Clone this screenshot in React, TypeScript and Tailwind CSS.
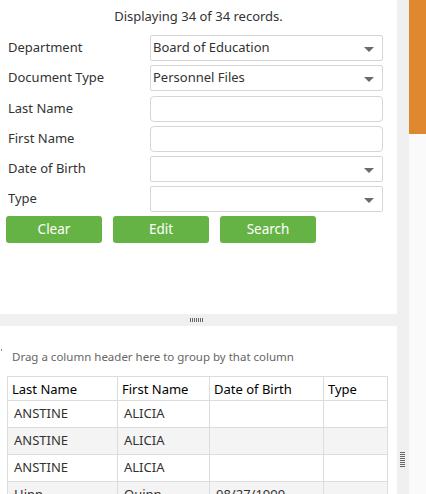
import React from "react";

const font = { fontFamily: '"Noto Sans", "Open Sans", sans-serif' };

function Arrow() {
  return (
    <svg width="10" height="6" viewBox="0 0 10 6" className="absolute right-[8px] top-[11px]">
      <polygon points="0,0 10,0 5,5" fill="#6b6b6b" />
    </svg>
  );
}

function Field({ label, value, select, rounded }: { label: string; value?: string; select?: boolean; rounded?: boolean }) {
  return (
    <div className="flex items-center h-[26px] mb-[4px]">
      <div className="w-[150px] pl-[8px] text-[13px] text-[#333]">{label}</div>
      <div
        className={
          "relative w-[233px] h-[26px] border border-[#d6d6d6] bg-white flex items-center pl-[2px] text-[13px] text-[#333] " +
          (rounded ? "rounded-[4px]" : "rounded-[2px]")
        }
      >
        {value}
        {select && <Arrow />}
      </div>
    </div>
  );
}

function Btn({ children }: { children: React.ReactNode }) {
  return (
    <div className="w-[96px] h-[27px] rounded-[3px] bg-[#65b345] text-white text-[13.5px] flex items-center justify-center">
      {children}
    </div>
  );
}

const rows = [
  ["ANSTINE", "ALICIA", "", ""],
  ["ANSTINE", "ALICIA", "", ""],
  ["ANSTINE", "ALICIA", "", ""],
  ["Hipp", "Quinn", "08/27/1999", ""],
];

export default function App() {
  return (
    <div className="w-[426px] h-[494px] flex overflow-hidden bg-white" style={font}>
      <div className="w-[397px] flex flex-col">
        <div className="h-[314px] bg-white">
          <div className="h-[35px] pt-[7px] text-center text-[13px] text-[#333]">Displaying 34 of 34 records.</div>
          <Field label="Department" value="Board of Education" select />
          <Field label="Document Type" value="Personnel Files" select />
          <div className="h-[1px]" />
          <Field label="Last Name" rounded />
          <Field label="First Name" rounded />
          <Field label="Date of Birth" select />
          <Field label="Type" select />
          <div className="flex gap-[11px] pl-[6px]">
            <Btn>Clear</Btn>
            <Btn>Edit</Btn>
            <Btn>Search</Btn>
          </div>
        </div>
        <div className="h-[12px] bg-[#f0f0f0] flex items-center justify-center">
          <div className="flex gap-[1px] ml-[-4px]">
            {Array.from({ length: 7 }).map((_, i) => (
              <div key={i} className="w-[1px] h-[4px] bg-[#666]" />
            ))}
          </div>
        </div>
        <div className="flex-1 bg-white relative overflow-hidden">
          <div className="absolute left-[1px] top-[23px] w-[1px] h-[2px] bg-[#65b345]" />
          <div className="pl-[12px] pt-[22px] h-[50px] text-[11.5px] text-[#666]">Drag a column header here to group by that column</div>
          <table className="ml-[7px] border-collapse text-[13px] text-[#333]" style={{ tableLayout: "fixed", width: 380 }}>
            <colgroup>
              <col style={{ width: 110 }} />
              <col style={{ width: 92 }} />
              <col style={{ width: 114 }} />
              <col style={{ width: 64 }} />
            </colgroup>
            <thead>
              <tr className="h-[24px]">
                {["Last Name", "First Name", "Date of Birth", "Type"].map((h) => (
                  <th key={h} className="border border-[#dcdcdc] font-normal text-left pl-[4px] text-black leading-[20px]">
                    {h}
                  </th>
                ))}
              </tr>
            </thead>
            <tbody>
              {rows.map((r, i) => (
                <tr key={i} className={"h-[27px] " + (i % 2 === 1 ? "bg-[#f4f4f4]" : "bg-white")}>
                  {r.map((c, j) => (
                    <td key={j} className="border border-[#dcdcdc] pl-[6px] whitespace-nowrap overflow-hidden">
                      {c}
                    </td>
                  ))}
                </tr>
              ))}
            </tbody>
          </table>
        </div>
      </div>
      <div className="w-[12px] bg-[#f0f0f0] flex flex-col items-center">
        <div className="mt-[452px] flex flex-col gap-[1px] ml-[-1px]">
          {Array.from({ length: 8 }).map((_, i) => (
            <div key={i} className="w-[5px] h-[1px] bg-[#666]" />
          ))}
        </div>
      </div>
      <div className="w-[17px] flex flex-col">
        <div className="h-[134px] bg-[#e0882f]" />
        <div className="flex-1 bg-[#fafafa]" />
      </div>
    </div>
  );
}
